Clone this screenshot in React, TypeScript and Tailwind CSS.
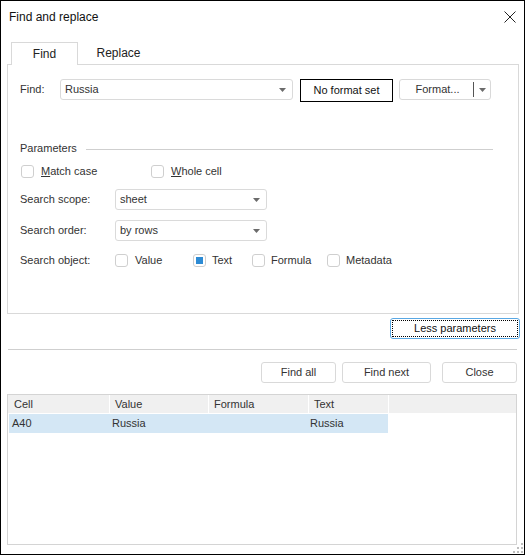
import React from 'react';

const font = { fontFamily: '"Liberation Sans", Arial, sans-serif' };

const Arrow: React.FC = () => (
  <svg width="7" height="4" viewBox="0 0 7 4" className="shrink-0">
    <path d="M0 0h7L3.5 4z" fill="#6b6b6b" />
  </svg>
);

const Combo: React.FC<{ value: string; width: string }> = ({ value, width }) => (
  <div
    className={`${width} h-[21px] border border-[#dadada] rounded-[3px] bg-white flex items-center justify-between pl-[4px] pr-[6px]`}
  >
    <span>{value}</span>
    <Arrow />
  </div>
);

const Check: React.FC<{ checked?: boolean }> = ({ checked }) => (
  <div className="w-[13px] h-[13px] border border-[#cfcfcf] rounded-[3px] bg-white flex items-center justify-center shrink-0">
    {checked && <div className="w-[7px] h-[7px] bg-[#2d8bd4]" />}
  </div>
);

const Button: React.FC<{ label: string; width: string }> = ({ label, width }) => (
  <div
    className={`${width} h-[21px] border border-[#d9d9d9] rounded-[3px] bg-white flex items-center justify-center`}
  >
    {label}
  </div>
);

export default function App() {
  return (
    <div
      style={font}
      className="relative w-[525px] h-[555px] border border-black bg-white text-[11px] text-[#333] flex flex-col overflow-hidden"
    >
      {/* Title bar */}
      <div className="h-[32px] flex items-center justify-between pl-[8px] pr-[8px] shrink-0">
        <span className="text-[12px] text-[#111]">Find and replace</span>
        <svg width="12" height="12" viewBox="0 0 12 12">
          <path d="M0.5 0.5L11.5 11.5M11.5 0.5L0.5 11.5" stroke="#222" strokeWidth="1" />
        </svg>
      </div>

      {/* Tabs */}
      <div className="flex items-end pl-[10px] mt-[8px] h-[23px] shrink-0">
        <div className="relative z-10 w-[67px] h-[23px] border border-b-0 border-[#d9d9d9] bg-white flex items-center justify-center text-[12px] text-[#222] mb-[-1px]">
          Find
        </div>
        <div className="w-[81px] h-[22px] flex items-center justify-center text-[12px] text-[#222]">
          Replace
        </div>
      </div>

      {/* Panel */}
      <div className="ml-[6px] mr-[5px] h-[250px] border border-[#d9d9d9] pl-[12px] pt-[14px] shrink-0">
        <div className="flex items-start h-[23px]">
          <span className="w-[40px] h-[21px] flex items-center">Find:</span>
          <Combo value="Russia" width="w-[233px]" />
          <div className="ml-[7px] w-[93px] h-[23px] border border-black flex items-center justify-center text-[#111]">
            No format set
          </div>
          <div className="ml-[6px] w-[92px] h-[21px] border border-[#d9d9d9] rounded-[3px] flex items-center">
            <span className="flex-1 text-center pl-[2px]">Format...</span>
            <div className="w-px h-[15px] bg-[#555]" />
            <div className="w-[16px] flex justify-center">
              <Arrow />
            </div>
          </div>
        </div>

        <div className="flex items-center h-[16px] mt-[38px] mr-[25px]">
          <span>Parameters</span>
          <div className="flex-1 h-px bg-[#cfcfcf] ml-[9px] mt-[3px]" />
        </div>

        <div className="flex items-center h-[16px] mt-[7px]">
          <div className="w-[130px] flex items-center ml-[1px]">
            <Check />
            <span className="ml-[7px]">
              <span className="underline">M</span>atch case
            </span>
          </div>
          <div className="flex items-center">
            <Check />
            <span className="ml-[7px]">
              <span className="underline">W</span>hole cell
            </span>
          </div>
        </div>

        <div className="flex items-center mt-[10px]">
          <span className="w-[95px]">Search scope:</span>
          <Combo value="sheet" width="w-[152px]" />
        </div>

        <div className="flex items-center mt-[10px]">
          <span className="w-[95px]">Search order:</span>
          <Combo value="by rows" width="w-[152px]" />
        </div>

        <div className="flex items-center h-[16px] mt-[11px]">
          <span className="w-[95px]">Search object:</span>
          <div className="w-[78px] flex items-center">
            <Check />
            <span className="ml-[7px]">Value</span>
          </div>
          <div className="w-[59px] flex items-center">
            <Check checked />
            <span className="ml-[6px]">Text</span>
          </div>
          <div className="w-[75px] flex items-center">
            <Check />
            <span className="ml-[6px]">Formula</span>
          </div>
          <div className="flex items-center">
            <Check />
            <span className="ml-[6px]">Metadata</span>
          </div>
        </div>
      </div>

      {/* Less parameters */}
      <div className="flex justify-end pr-[4px] mt-[4px] shrink-0">
        <div className="w-[130px] h-[21px] border border-[#5aa8e4] rounded-[3px] bg-white p-px">
          <div className="w-full h-full border border-dotted border-black flex items-center justify-center text-[#111]">
            Less parameters
          </div>
        </div>
      </div>

      {/* Separator */}
      <div className="ml-[7px] mr-[7px] mt-[10px] h-px bg-[#cfcfcf] shrink-0" />

      {/* Action buttons */}
      <div className="flex justify-end pr-[7px] mt-[12px] shrink-0">
        <Button label="Find all" width="w-[75px]" />
        <div className="ml-[6px]">
          <Button label="Find next" width="w-[89px]" />
        </div>
        <div className="ml-[11px]">
          <Button label="Close" width="w-[75px]" />
        </div>
      </div>

      {/* Results table */}
      <div className="ml-[6px] w-[510px] h-[151px] mt-[11px] border border-[#d4d4d4] shrink-0">
        <div className="flex h-[18px] text-[#333]">
          <div className="w-[101px] bg-[#f0f0f0] flex items-center pl-[6px]">Cell</div>
          <div className="w-[98px] ml-px bg-[#f0f0f0] flex items-center pl-[5px]">Value</div>
          <div className="w-[99px] ml-px bg-[#f0f0f0] flex items-center pl-[5px]">Formula</div>
          <div className="w-[79px] ml-px bg-[#f0f0f0] flex items-center pl-[5px]">Text</div>
          <div className="flex-1 ml-px bg-[#f0f0f0]" />
        </div>
        <div className="flex h-[19px] mt-px ml-px w-[379px] bg-[#d4e7f5] items-center">
          <div className="w-[101px] pl-[3px]">A40</div>
          <div className="w-[199px] pl-[2px]">Russia</div>
          <div className="flex-1 pl-[1px]">Russia</div>
        </div>
      </div>

      {/* Resize grip */}
      <svg width="10" height="10" viewBox="0 0 10 10" className="absolute right-[1px] bottom-[1px]">
        <rect x="8" y="0" width="2" height="2" fill="#bdbdbd" />
        <rect x="4" y="4" width="2" height="2" fill="#bdbdbd" />
        <rect x="8" y="4" width="2" height="2" fill="#bdbdbd" />
        <rect x="0" y="8" width="2" height="2" fill="#bdbdbd" />
        <rect x="4" y="8" width="2" height="2" fill="#bdbdbd" />
        <rect x="8" y="8" width="2" height="2" fill="#bdbdbd" />
      </svg>
    </div>
  );
}
